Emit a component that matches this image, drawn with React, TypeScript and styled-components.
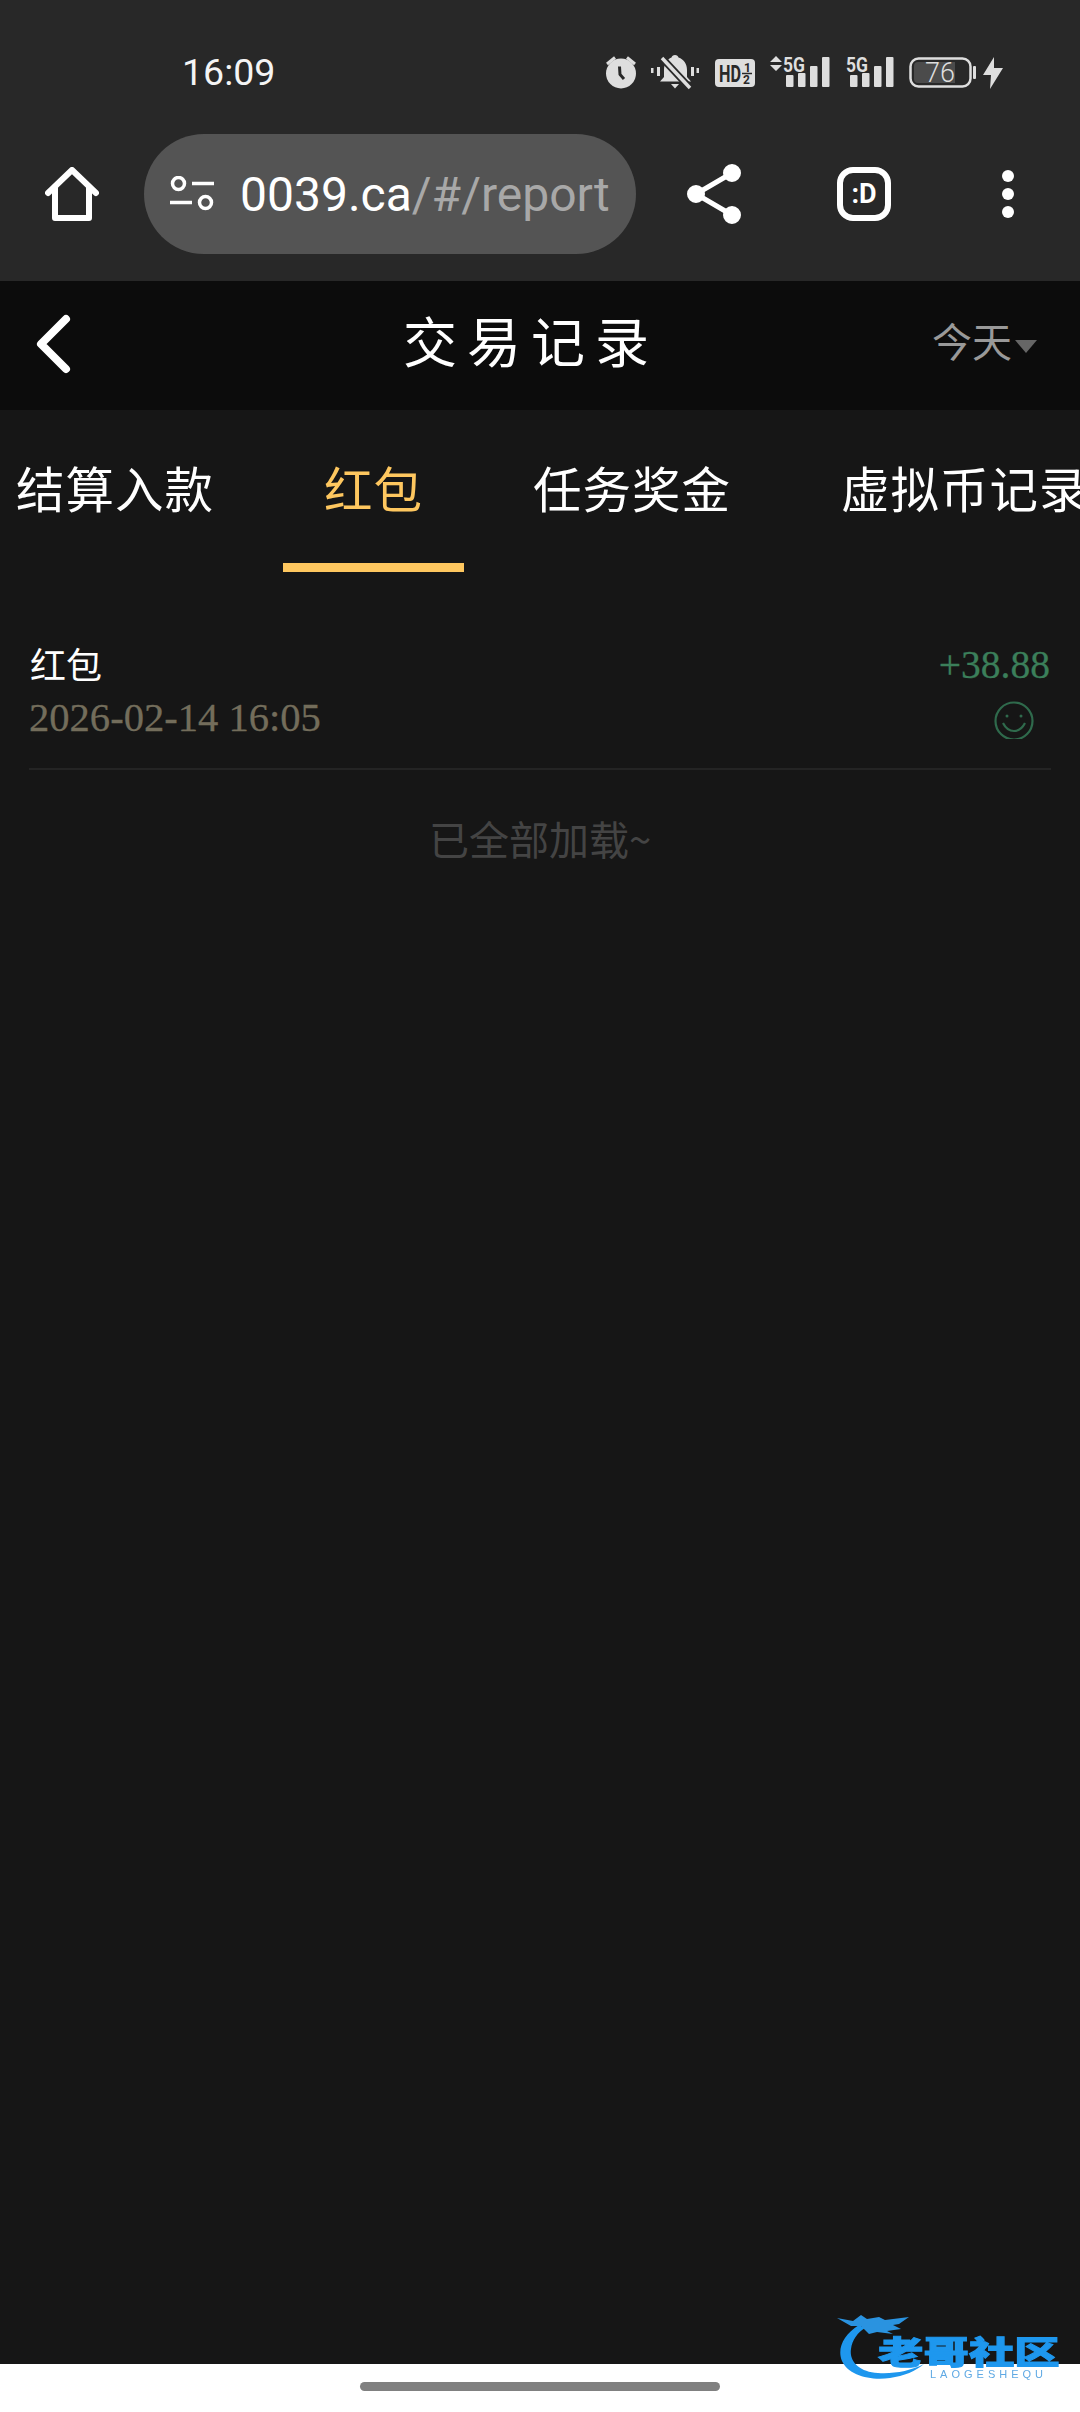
import React from "react";
import styled, { createGlobalStyle } from "styled-components";

const GlobalStyle = createGlobalStyle`
    html, body {
        margin: 0;
        padding: 0;
        background-color: #161616;
    }

    * {
        box-sizing: border-box;
    }
`;

const cjkSans = `"Noto Sans CJK SC", "Noto Sans", sans-serif`;
const cjkSerif = `"Liberation Serif", "Noto Sans CJK SC", serif`;
const tabs = ["结算入款", "红包", "任务奖金", "虚拟币记录"];

const Page = styled.div`
    position: relative;
    display: flex;
    flex-direction: column;
    width: 1080px;
    height: 2412px;
    overflow: hidden;
    background-color: #161616;
`;

const Chrome = styled.div`
    height: 281px;
    background-color: #282828;
`;

const StatusBar = styled.div`
    display: flex;
    align-items: flex-start;
    height: 134px;
    padding: 55px 0 0 182px;
`;

const Clock = styled.div`
    margin-top: -1px;
    font-family: Roboto, sans-serif;
    font-size: 37.5px;
    line-height: 36px;
    color: #f4f4f4;
`;

const StatusIcons = styled.div`
    display: flex;
    align-items: flex-start;
    margin-left: auto;
    padding-right: 77px;
`;

const StatusIcon = styled.svg<{ $gap?: number }>`
    display: block;
    flex: none;
    margin-left: ${(p) => p.$gap ?? 0}px;
    overflow: visible;
`;

const Toolbar = styled.div`
    display: grid;
    grid-template-columns: 144px 492px 156px 144px 144px;
    align-items: center;
    height: 120px;
`;

const ToolSlot = styled.div`
    display: flex;
    justify-content: center;
    align-items: center;
`;

const UrlPill = styled.div`
    display: flex;
    align-items: center;
    height: 120px;
    padding-left: 26px;
    border-radius: 60px;
    background-color: #545454;
    overflow: hidden;
`;

const UrlText = styled.div`
    margin-left: 26px;
    font-family: Roboto, sans-serif;
    font-size: 48px;
    white-space: nowrap;
    color: #a8a8a8;

    b {
        font-weight: 400;
        color: #ffffff;
    }
`;

const TabCount = styled.div`
    display: flex;
    justify-content: center;
    align-items: center;
    width: 54px;
    height: 54px;
    border: 6px solid #ffffff;
    border-radius: 16px;
    font-family: Roboto, sans-serif;
    font-size: 27px;
    font-weight: 700;
    color: #ffffff;
`;

const Header = styled.div`
    display: grid;
    grid-template-columns: 403px auto 1fr;
    align-items: center;
    height: 129px;
    background-color: #0c0c0c;
`;

const BackButton = styled.div`
    padding-left: 34px;
`;

const Title = styled.h1`
    margin: 0 0 12px;
    font-family: ${cjkSans};
    font-size: 54px;
    font-weight: 400;
    letter-spacing: 10px;
    color: #ffffff;
`;

const DateFilter = styled.div`
    display: flex;
    justify-content: flex-end;
    align-items: center;
    gap: 3px;
    margin-bottom: 12px;
    padding-right: 43px;
    font-family: ${cjkSans};
    font-size: 40px;
    color: #999999;
`;

const Caret = styled.span`
    width: 0;
    height: 0;
    margin-top: 14px;
    border-left: 11px solid transparent;
    border-right: 11px solid transparent;
    border-top: 13px solid #666666;
`;

const TabStrip = styled.div`
    display: flex;
    flex: none;
    width: 1080px;
    overflow: hidden;
`;

const TabList = styled.div`
    display: flex;
    flex: none;
    gap: 28px;
    margin-left: -25px;
`;

const Tab = styled.div<{ $active?: boolean }>`
    flex: none;
    height: 162px;
    padding: 49px 41px 0;
    border-bottom: 9px solid ${(p) => (p.$active ? "#fec75f" : "transparent")};
    font-family: ${cjkSans};
    font-size: 48.5px;
    line-height: 56px;
    letter-spacing: 1px;
    white-space: nowrap;
    color: ${(p) => (p.$active ? "#fec75f" : "#ffffff")};
`;

const Records = styled.div`
    margin: 0 29px 0 29px;
`;

const RecordRow = styled.div`
    display: flex;
    justify-content: space-between;
    height: 198px;
    padding: 69px 1px 0;
    border-bottom: 2px solid #242424;
`;

const RecordInfo = styled.div`
    display: flex;
    flex-direction: column;
    gap: 10px;
`;

const RecordName = styled.div`
    font-family: ${cjkSans};
    font-size: 36px;
    line-height: 44px;
    color: #ffffff;
`;

const RecordDate = styled.div`
    margin-left: -1px;
    font-family: ${cjkSerif};
    font-size: 40.6px;
    line-height: 46px;
    color: #736d5b;
    -webkit-text-stroke: 0.3px #736d5b;
`;

const RecordResult = styled.div`
    display: flex;
    flex-direction: column;
    align-items: flex-end;
    padding-top: 1px;
`;

const Amount = styled.div`
    font-family: ${cjkSerif};
    font-size: 39.5px;
    line-height: 46px;
    color: #3b7f5a;
    -webkit-text-stroke: 0.3px #3b7f5a;
`;

const AmountIcon = styled.svg`
    display: block;
    margin: 13px 16px 0 0;
`;

const EndNote = styled.div`
    padding-top: 39px;
    text-align: center;
    font-family: ${cjkSans};
    font-size: 40px;
    line-height: 58px;
    color: #444444;
`;

const NavBar = styled.div`
    display: flex;
    flex: none;
    justify-content: center;
    align-items: flex-start;
    height: 48px;
    margin-top: auto;
    padding-top: 18px;
    background-color: #ffffff;
`;

const NavHandle = styled.div`
    width: 360px;
    height: 9px;
    border-radius: 5px;
    background-color: #808080;
`;

const Watermark = styled.div`
    position: absolute;
    left: 837px;
    top: 2313px;
    width: 223px;
    height: 67px;
    padding: 20px 0 0 41px;
    filter: blur(0.7px);
    pointer-events: none;
`;

const WatermarkArt = styled.svg`
    position: absolute;
    left: 0;
    top: 0;
`;

const WatermarkName = styled.div`
    width: 128px;
    height: 36px;
    transform: scaleX(1.42);
    transform-origin: left center;
    font-family: ${cjkSans};
    font-size: 32px;
    font-weight: 900;
    line-height: 34px;
    white-space: nowrap;
    color: #1e97ee;
    -webkit-text-stroke: 1px #1e97ee;
`;

const WatermarkSub = styled.div`
    margin: 0 0 0 52px;
    font-family: "Liberation Sans", sans-serif;
    font-size: 11px;
    line-height: 10px;
    letter-spacing: 4px;
    white-space: nowrap;
    color: #5fa9e4;
`;

const iconGrey = "#dedede";
const iconDark = "#282828";

function AlarmIcon() {
    return (
        <StatusIcon width="32" height="34" viewBox="0 0 32 34">
            <circle cx="16" cy="18.5" r="15" fill={iconGrey} />
            <path d="M2 9l8-6.5M30 9l-8-6.5" stroke={iconGrey} strokeWidth="3" fill="none" />
            <path d="M14.5 11.5l.5 8 4 4.5" stroke={iconDark} strokeWidth="3" fill="none" />
        </StatusIcon>
    );
}

function MutedBellIcon() {
    return (
        <StatusIcon $gap={14} width="48" height="34" viewBox="0 0 48 34">
            <path d="M0 13h2.500v5H0zM6 12h3v9H6zM40 12h3v9h-3zM45.500 13H48v5h-2.500z" fill={iconGrey} />
            <path
                d="M24 0c2 0 3 1 3.500 2.500C33 4.500 36 9 36 15v7l4 4.500H9l4-4.500v-7C13 9 16 4.500 20.500 2.500 21 1 22 0 24 0z"
                fill={iconGrey}
            />
            <path d="M20 29h8l-4 4.500z" fill={iconGrey} />
            <path d="M11 3l28 30" stroke={iconDark} strokeWidth="7" />
            <path d="M11 3l28 30" stroke={iconGrey} strokeWidth="3.500" />
        </StatusIcon>
    );
}

function HdIcon() {
    return (
        <StatusIcon $gap={16} width="40" height="34" viewBox="0 0 40 34">
            <rect x="0" y="4" width="40" height="28" rx="4" fill={iconGrey} />
            <text x="4" y="27" fontFamily="Roboto, sans-serif" fontSize="24" fontWeight="700" textLength="22" lengthAdjust="spacingAndGlyphs" fill={iconDark}>
                HD
            </text>
            <text x="29" y="17" fontFamily="Roboto, sans-serif" fontSize="12" fontWeight="700" fill={iconDark}>
                1
            </text>
            <path d="M27 18.500h10" stroke={iconDark} strokeWidth="1.500" />
            <text x="28" y="29" fontFamily="Roboto, sans-serif" fontSize="12" fontWeight="700" fill={iconDark}>
                2
            </text>
        </StatusIcon>
    );
}

function SignalIcon({ arrows, gap }: { arrows?: boolean; gap: number }) {
    const shift = arrows ? 16 : 4;
    return (
        <StatusIcon $gap={gap} width={shift + 43} height="34" viewBox={`0 0 ${shift + 43} 34`}>
            {arrows && <path d="M6 1l6 6H0zM0 10h12l-6 6z" fill={iconGrey} />}
            <text
                x={arrows ? 13 : 0}
                y="17"
                fontFamily="Roboto, sans-serif"
                fontSize="21"
                fontWeight="700"
                textLength="22"
                lengthAdjust="spacingAndGlyphs"
                fill={iconGrey}
            >
                5G
            </text>
            <rect x={shift} y="20" width="7.500" height="12" rx="1" fill={iconGrey} />
            <rect x={shift + 12} y="18" width="7.500" height="14" rx="1" fill={iconGrey} />
            <rect x={shift + 24} y="11" width="7.500" height="21" rx="1" fill={iconGrey} />
            <rect x={shift + 36} y="2" width="7.500" height="30" rx="1" fill={iconGrey} />
        </StatusIcon>
    );
}

function BatteryIcon() {
    return (
        <StatusIcon $gap={16} width="67" height="34" viewBox="0 0 67 34">
            <rect x="1.500" y="3.500" width="60" height="28" rx="8" fill="none" stroke={iconGrey} strokeWidth="2.500" />
            <path d="M9 7h37v21H9a4 4 0 0 1-4-4V11a4 4 0 0 1 4-4z" fill="#4b4b4b" />
            <rect x="64" y="11" width="3" height="13" rx="1" fill={iconGrey} />
            <text x="31" y="27" textAnchor="middle" fontFamily="Roboto, sans-serif" fontSize="27" fontWeight="300" fill={iconGrey}>
                76
            </text>
        </StatusIcon>
    );
}

function BoltIcon() {
    return (
        <StatusIcon $gap={7} width="20" height="34" viewBox="0 0 20 34">
            <path d="M11 2L0 20h8l-1 14 13-21h-9z" fill={iconGrey} />
        </StatusIcon>
    );
}

export default function App() {
    return (
        <Page>
            <GlobalStyle />
            <Chrome>
                <StatusBar>
                    <Clock>16:09</Clock>
                    <StatusIcons>
                        <AlarmIcon />
                        <MutedBellIcon />
                        <HdIcon />
                        <SignalIcon arrows gap={15} />
                        <SignalIcon gap={17} />
                        <BatteryIcon />
                        <BoltIcon />
                    </StatusIcons>
                </StatusBar>
                <Toolbar>
                    <ToolSlot>
                        <svg width="54" height="54" viewBox="0 0 54 54" fill="none" stroke="#fff" strokeWidth="6" strokeLinejoin="round" strokeLinecap="round">
                            <path d="M3 26L27 3l24 23M10 21v30h34V21" />
                        </svg>
                    </ToolSlot>
                    <UrlPill>
                        <svg width="44" height="36" viewBox="0 0 44 36" fill="none" stroke="#fff" strokeWidth="3.500">
                            <circle cx="8.500" cy="7.500" r="6" />
                            <circle cx="35.500" cy="26.500" r="6" />
                            <path d="M22 7.500h22M0 26.500h22" />
                        </svg>
                        <UrlText>
                            <b>0039.ca</b>/#/report
                        </UrlText>
                    </UrlPill>
                    <ToolSlot>
                        <svg width="54" height="60" viewBox="0 0 54 60" fill="#fff" stroke="#fff" strokeWidth="5">
                            <path d="M45 9L9 30l36 21" fill="none" />
                            <circle cx="45" cy="9" r="6.500" />
                            <circle cx="9" cy="30" r="6.500" />
                            <circle cx="45" cy="51" r="6.500" />
                        </svg>
                    </ToolSlot>
                    <ToolSlot>
                        <TabCount>:D</TabCount>
                    </ToolSlot>
                    <ToolSlot>
                        <svg width="12" height="48" viewBox="0 0 12 48" fill="#fff">
                            <circle cx="6" cy="6" r="6" />
                            <circle cx="6" cy="24" r="6" />
                            <circle cx="6" cy="42" r="6" />
                        </svg>
                    </ToolSlot>
                </Toolbar>
            </Chrome>
            <Header>
                <BackButton>
                    <svg width="38" height="60" viewBox="0 0 38 60" fill="none" stroke="#fff" strokeWidth="8" strokeLinecap="round" strokeLinejoin="round">
                        <path d="M32 5L7 30l25 25" />
                    </svg>
                </BackButton>
                <Title>交易记录</Title>
                <DateFilter>
                    今天
                    <Caret />
                </DateFilter>
            </Header>
            <TabStrip>
                <TabList>
                    {tabs.map((tab) => (
                        <Tab key={tab} $active={tab === "红包"}>
                            {tab}
                        </Tab>
                    ))}
                </TabList>
            </TabStrip>
            <Records>
                <RecordRow>
                    <RecordInfo>
                        <RecordName>红包</RecordName>
                        <RecordDate>2026-02-14 16:05</RecordDate>
                    </RecordInfo>
                    <RecordResult>
                        <Amount>+38.88</Amount>
                        <AmountIcon width="40" height="38" viewBox="0 0 40 38" fill="none" stroke="#2f6a4c" strokeWidth="2.200">
                            <circle cx="20" cy="20" r="18.500" />
                            <path d="M9 22c3 6 7 8 11 8s8-2 11-8" />
                            <circle cx="13" cy="15" r="1.500" fill="#2f6a4c" stroke="none" />
                            <circle cx="27" cy="15" r="1.500" fill="#2f6a4c" stroke="none" />
                        </AmountIcon>
                    </RecordResult>
                </RecordRow>
                <EndNote>已全部加载~</EndNote>
            </Records>
            <NavBar>
                <NavHandle />
            </NavBar>
            <Watermark>
                <WatermarkArt width="223" height="67" viewBox="0 0 223 67">
                    <path d="M22 12C6 22 0 36 5 48c6 14 28 20 48 17 14-2 26-7 34-14-14 7-30 10-46 9C22 59 12 48 14 36c1-9 7-17 14-21z" fill="#1e97ee" />
                    <path d="M0 5l16 3 8-6 6 4 12-2 6 3 24-3-10 7-6 1 8 4-14 2 6 3-16-2-8 2-8-8-10 0z" fill="#2a93e0" />
                </WatermarkArt>
                <WatermarkName>老哥社区</WatermarkName>
                <WatermarkSub>LAOGESHEQU</WatermarkSub>
            </Watermark>
        </Page>
    );
}
